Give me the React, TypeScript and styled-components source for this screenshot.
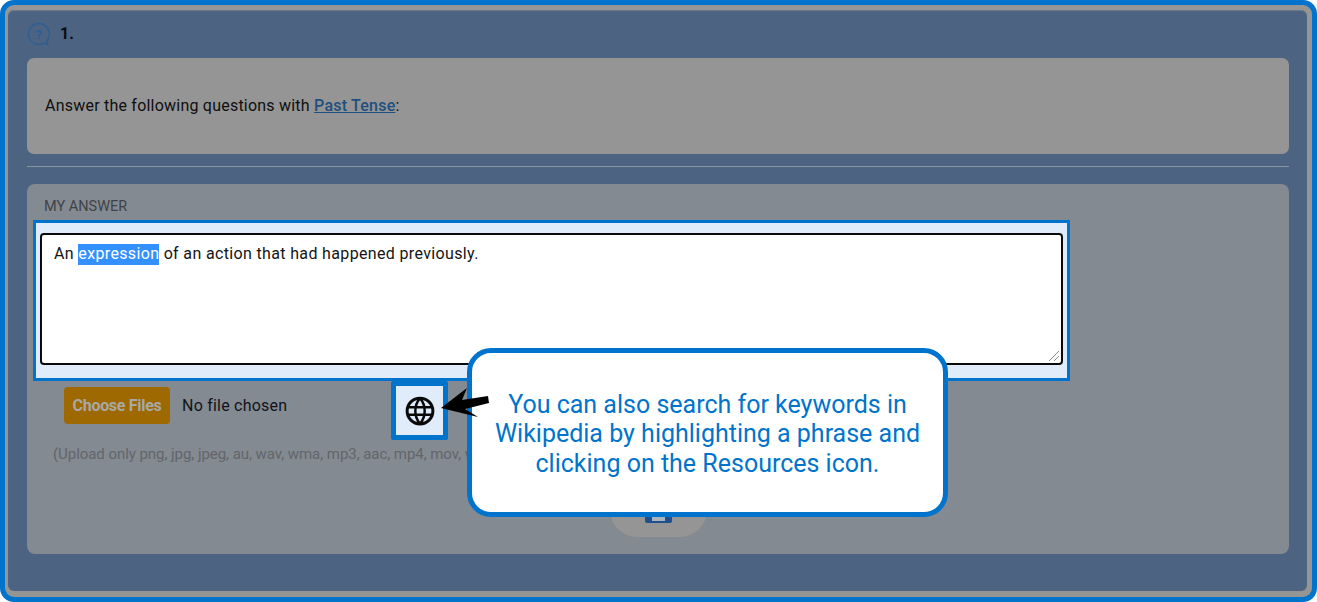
import styled, { createGlobalStyle } from "styled-components";

const Global = createGlobalStyle`
  html, body { margin: 0; padding: 0; width: 1317px; height: 602px; overflow: hidden; }
  body { font-family: Roboto, "Liberation Sans", sans-serif; }
`;

const Frame = styled.div`
  position: relative;
  box-sizing: border-box;
  width: 1317px;
  height: 602px;
  border: 5px solid #0074cc;
  border-radius: 14px;
  background: #959595;
  overflow: hidden;
`;

const Screen = styled.div`
  box-sizing: border-box;
  margin: 5px 5px 0 3px;
  height: 581px;
  padding: 9px 18px 0 19px;
  background: #4c6382;
  border-radius: 6px;
  box-shadow: inset 0 1px 1px #6f7a88;
`;

const Heading = styled.div`
  display: flex;
  align-items: center;
  gap: 9px;
  height: 29px;
  margin-bottom: 10px;
`;

const Number = styled.span`
  font-size: 16px;
  font-weight: 700;
  color: #0c0c0c;
  margin-top: -1px;
`;

const Question = styled.div`
  display: flex;
  align-items: center;
  height: 96px;
  box-sizing: border-box;
  padding: 0 18px 1px;
  border-radius: 7px;
  background: #959595;
  font-size: 16px;
  letter-spacing: 0.22px;
  color: #0f0f0f;
`;

const Term = styled.span`
  color: #1f4f80;
  font-weight: 500;
  text-decoration: underline;
`;

const Divider = styled.div`
  height: 1px;
  margin: 12px 0 17px;
  background: #8a949f;
`;

const AnswerCard = styled.div`
  position: relative;
  box-sizing: border-box;
  height: 370px;
  padding: 15px 0 0 6px;
  border-radius: 8px;
  background: #848a91;
`;

const Label = styled.div`
  margin-left: 11px;
  height: 21px;
  font-size: 14.5px;
  line-height: 16px;
  color: #3f4347;
`;

const Spotlight = styled.div`
  box-sizing: border-box;
  width: 1037px;
  height: 161px;
  padding: 10px 4px 0;
  border: 3px solid #0074cc;
  background: #e0ecfa;
`;

const Field = styled.div`
  position: relative;
  box-sizing: border-box;
  height: 132px;
  padding: 9px 12px;
  border: 2px solid #0a0a0a;
  border-radius: 4px;
  background: #fff;
  font-size: 16px;
  letter-spacing: 0.35px;
  line-height: 20px;
  color: #141414;
`;

const Selected = styled.span`
  background: #3390ff;
  color: #fff;
  padding-bottom: 2px;
`;

const Grip = styled.svg`
  position: absolute;
  right: 1px;
  bottom: 1px;
`;

const FileRow = styled.div`
  display: flex;
  align-items: center;
  gap: 12px;
  margin: 6px 0 0 31px;
`;

const ChooseButton = styled.div`
  display: flex;
  align-items: center;
  justify-content: center;
  width: 106px;
  height: 37px;
  border-radius: 4px;
  background: #9e6900;
  color: #a8a8a8;
  font-size: 16px;
  font-weight: 700;
  letter-spacing: -0.3px;
`;

const FileName = styled.span`
  font-size: 16px;
  letter-spacing: 0.22px;
  color: #10131c;
`;

const Hint = styled.div`
  margin: 21px 0 0 20px;
  font-size: 15px;
  letter-spacing: -0.05px;
  color: #62656a;
  white-space: nowrap;
`;

const SaveButton = styled.div`
  position: absolute;
  left: 583px;
  bottom: 17px;
  display: flex;
  justify-content: center;
  align-items: flex-end;
  box-sizing: border-box;
  width: 97px;
  height: 54px;
  padding-bottom: 14px;
  border-radius: 30px;
  background: #959595;
`;

const GlobeBox = styled.div`
  position: absolute;
  left: 386px;
  top: 376px;
  display: flex;
  align-items: center;
  justify-content: center;
  box-sizing: border-box;
  width: 57px;
  height: 59px;
  border: 5px solid #0074cc;
  border-radius: 2px;
  background: #e0ecfa;
`;

const Pointer = styled.svg`
  position: absolute;
  left: 436px;
  top: 382px;
`;

const Callout = styled.div`
  position: absolute;
  left: 462px;
  top: 343px;
  display: flex;
  align-items: center;
  justify-content: center;
  box-sizing: border-box;
  width: 481px;
  height: 169px;
  padding: 3px 20px 0;
  border: 5px solid #0074cc;
  border-radius: 24px;
  background: #fff;
  color: #0074cc;
  font-size: 25px;
  line-height: 29.5px;
  text-align: center;
`;

const App = () => {
  return (
    <>
      <Global />
      <Frame>
        <Screen>
          <Heading>
            <svg width="24" height="24" viewBox="0 0 24 24" fill="none" stroke="#2c5f93" strokeWidth="1.4">
              <path d="M12 1.5a10.5 10.5 0 1 0 5 19.7l3.8 1-.9-3.4A10.5 10.5 0 0 0 12 1.5z" />
              <text x="12" y="16.5" textAnchor="middle" fontSize="13" fontWeight="700" fill="#2c5f93" stroke="none" fontFamily="Roboto">?</text>
            </svg>
            <Number>1.</Number>
          </Heading>
          <Question>
            <span>
              Answer the following questions with <Term>Past Tense</Term>:
            </span>
          </Question>
          <Divider />
          <AnswerCard>
            <Label>MY ANSWER</Label>
            <Spotlight>
              <Field>
                An <Selected>expression</Selected> of an action that had happened previously.
                <Grip width="13" height="13" viewBox="0 0 13 13" stroke="#8a8a8a" strokeWidth="1">
                  <path d="M2 12 12 2M7 12l5-5" />
                </Grip>
              </Field>
            </Spotlight>
            <FileRow>
              <ChooseButton>Choose Files</ChooseButton>
              <FileName>No file chosen</FileName>
            </FileRow>
            <Hint>(Upload only png, jpg, jpeg, au, wav, wma, mp3, aac, mp4, mov, wmv</Hint>
            <SaveButton>
              <svg width="27" height="28" viewBox="0 0 27 28">
                <rect x="0" y="0" width="27" height="28" rx="2" fill="#1f4f8c" />
                <path d="M7 18h13v8H7z" fill="#a9b4bf" />
              </svg>
            </SaveButton>
          </AnswerCard>
        </Screen>
        <GlobeBox>
          <svg width="30" height="30" viewBox="0 0 24 24" fill="none" stroke="#0a0a0a" strokeWidth="2.4">
            <circle cx="12" cy="12" r="10.3" />
            <path d="M1.7 9h20.6M1.7 15h20.6M12 1.7c-5 6-5 14.600 0 20.600M12 1.700c5 6 5 14.600 0 20.600" strokeWidth="2" />
          </svg>
        </GlobeBox>
        <Callout>You can also search for keywords in Wikipedia by highlighting a phrase and clicking on the Resources icon.</Callout>
        <Pointer width="50" height="32" viewBox="0 0 50 32">
          <path d="M0 21 26 1 21 13 47 9 48 16 24 22 37 30z" fill="#000" />
        </Pointer>
      </Frame>
    </>
  );
};

export default App;
